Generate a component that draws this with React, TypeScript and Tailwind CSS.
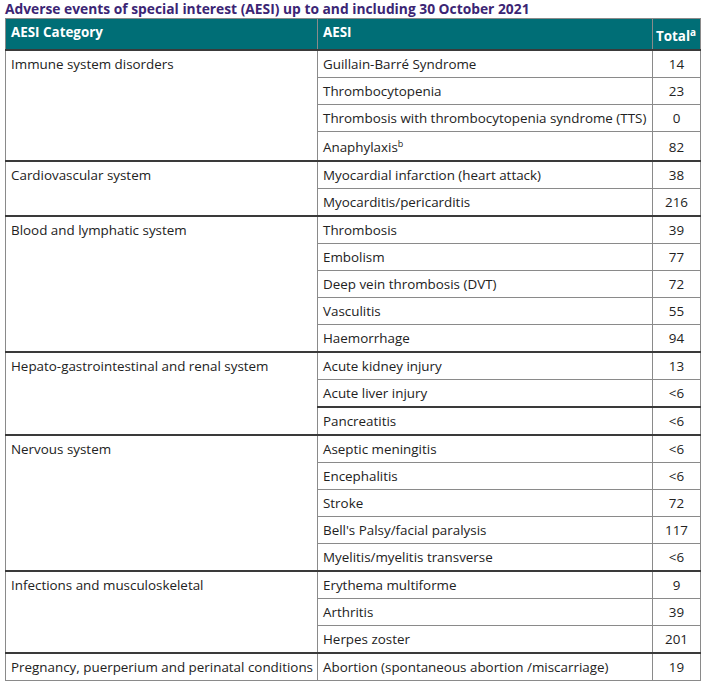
const groups: { category: string; rows: { aesi: string; sup?: string; total: string }[] }[] = [
  {
    category: "Immune system disorders",
    rows: [
      { aesi: "Guillain-Barré Syndrome", total: "14" },
      { aesi: "Thrombocytopenia", total: "23" },
      { aesi: "Thrombosis with thrombocytopenia syndrome (TTS)", total: "0" },
      { aesi: "Anaphylaxis", sup: "b", total: "82" },
    ],
  },
  {
    category: "Cardiovascular system",
    rows: [
      { aesi: "Myocardial infarction (heart attack)", total: "38" },
      { aesi: "Myocarditis/pericarditis", total: "216" },
    ],
  },
  {
    category: "Blood and lymphatic system",
    rows: [
      { aesi: "Thrombosis", total: "39" },
      { aesi: "Embolism", total: "77" },
      { aesi: "Deep vein thrombosis (DVT)", total: "72" },
      { aesi: "Vasculitis", total: "55" },
      { aesi: "Haemorrhage", total: "94" },
    ],
  },
  {
    category: "Hepato-gastrointestinal and renal system",
    rows: [
      { aesi: "Acute kidney injury", total: "13" },
      { aesi: "Acute liver injury", total: "<6" },
      { aesi: "Pancreatitis", total: "<6" },
    ],
  },
  {
    category: "Nervous system",
    rows: [
      { aesi: "Aseptic meningitis", total: "<6" },
      { aesi: "Encephalitis", total: "<6" },
      { aesi: "Stroke", total: "72" },
      { aesi: "Bell's Palsy/facial paralysis", total: "117" },
      { aesi: "Myelitis/myelitis transverse", total: "<6" },
    ],
  },
  {
    category: "Infections and musculoskeletal",
    rows: [
      { aesi: "Erythema multiforme", total: "9" },
      { aesi: "Arthritis", total: "39" },
      { aesi: "Herpes zoster", total: "201" },
    ],
  },
  {
    category: "Pregnancy, puerperium and perinatal conditions",
    rows: [{ aesi: "Abortion (spontaneous abortion /miscarriage)", total: "19" }],
  },
];

export default function App() {
  return (
    <div className="min-h-[684px] bg-white pl-[5px] font-['Open_Sans',sans-serif] text-[13.4px] text-[#222]">
      <h2 className="text-[13.8px] font-bold leading-[18px] text-[#3b2574]">
        Adverse events of special interest (AESI) up to and including 30 October 2021
      </h2>
      <table className="w-[695px] table-fixed border-collapse border border-[#8a8a8a]">
        <colgroup>
          <col className="w-[312px]" />
          <col className="w-[335px]" />
          <col className="w-[48px]" />
        </colgroup>
        <thead>
          <tr className="bg-[#006e76] text-white">
            <th className="h-[31px] border border-[#8a8a8a] px-[5px] pt-[4px] text-left align-top font-bold leading-[18px]">
              AESI Category
            </th>
            <th className="border border-[#8a8a8a] px-[5px] pt-[4px] text-left align-top font-bold leading-[18px]">
              AESI
            </th>
            <th className="border border-[#8a8a8a] px-[3px] pt-[8px] text-left align-top font-bold leading-[18px]">
              Total<sup className="text-[10px] leading-none">a</sup>
            </th>
          </tr>
        </thead>
        <tbody>
          {groups.map((g) =>
            g.rows.map((r, i) => {
              const first = i === 0;
              const pancreas = r.aesi === "Pancreatitis";
              const top = first || pancreas ? "border-t-2 border-t-[#3a3a3a]" : "";
              const pad = r.sup ? "pt-[5px] pb-[3px]" : "py-[3px]";
              return (
                <tr key={g.category + r.aesi} className="h-[27px]">
                  {first && (
                    <td
                      rowSpan={g.rows.length}
                      className={`whitespace-nowrap border border-[#8a8a8a] pl-[5px] pr-0 py-[3px] align-top leading-[20px] ${top}`}
                    >
                      {g.category}
                    </td>
                  )}
                  <td className={`whitespace-nowrap border border-[#8a8a8a] px-[5px] leading-[20px] ${pad} ${top}`}>
                    {r.aesi}
                    {r.sup && <sup className="text-[9px] leading-none">{r.sup}</sup>}
                  </td>
                  <td className={`border border-[#8a8a8a] px-[3px] text-center leading-[20px] ${pad} ${top}`}>
                    {r.total}
                  </td>
                </tr>
              );
            })
          )}
        </tbody>
      </table>
    </div>
  );
}
